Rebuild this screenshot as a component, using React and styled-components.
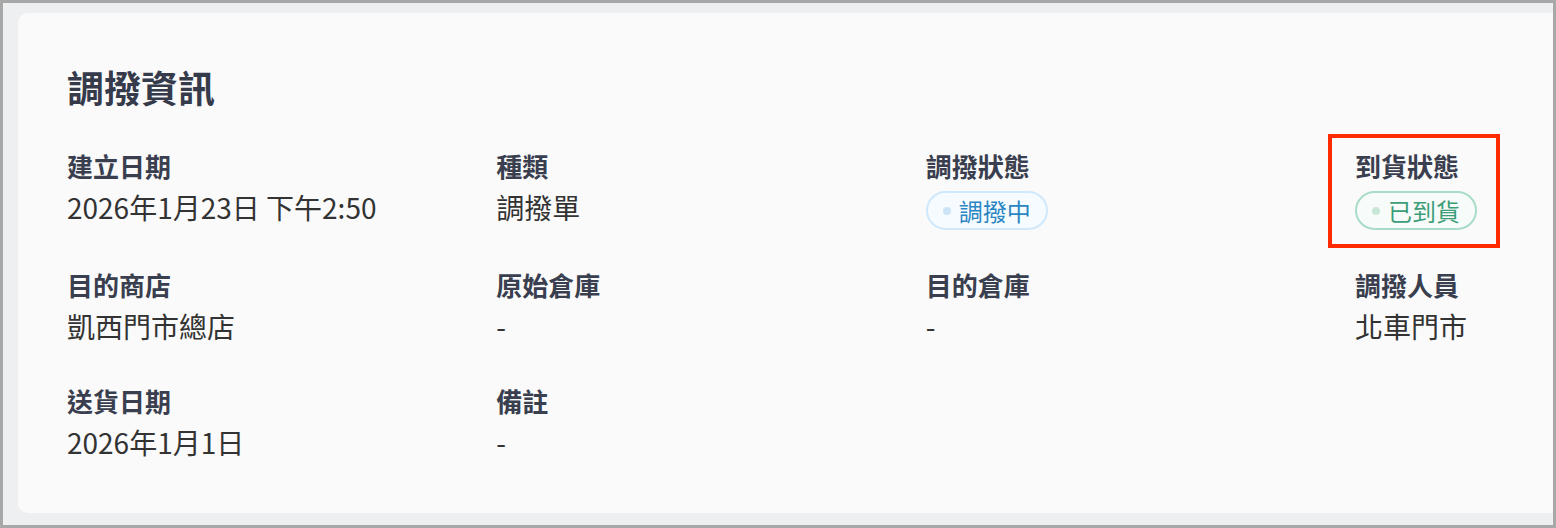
import React from "react";
import styled, { createGlobalStyle } from "styled-components";

const GlobalStyle = createGlobalStyle`
  html, body {
    margin: 0;
    padding: 0;
    background: #eeeff1;
  }
  body {
    font-family: "Noto Sans CJK TC", "Noto Sans", sans-serif;
  }
`;

const Frame = styled.div`
  box-sizing: border-box;
  width: 1556px;
  height: 528px;
  border: 3px solid #a8a8a8;
  background: #eeeff1;
  padding: 10px 0 12px 15px;
  overflow: hidden;
`;

const Card = styled.section`
  box-sizing: border-box;
  width: 1832px;
  height: 500px;
  background: #fafafa;
  border-radius: 10px;
  padding: 52px 49px 0 49px;
`;

const Title = styled.h2`
  margin: 0 0 37px;
  font-size: 37px;
  line-height: 44px;
  font-weight: 700;
  color: #363b4c;
`;

const Grid = styled.div`
  display: grid;
  grid-template-columns: repeat(4, 429.33px);
  row-gap: 35px;
`;

const Field = styled.div`
  position: relative;
  display: flex;
  flex-direction: column;
  align-items: flex-start;
  gap: 1px;
`;

const Highlight = styled.div`
  position: absolute;
  left: -27px;
  top: -12px;
  width: 172px;
  height: 114px;
  box-sizing: border-box;
  border: 4px solid #ff2a00;
  pointer-events: none;
`;

const Label = styled.div`
  font-size: 26px;
  line-height: 40px;
  font-weight: 600;
  color: #3a3f50;
`;

const Value = styled.div`
  font-size: 28px;
  line-height: 40px;
  font-weight: 400;
  color: #333333;
`;

const tones = {
  blue: { border: "#cfe8fb", bg: "#f6fbff", dot: "#cbe4f6", text: "#2a86c2" },
  green: { border: "#a8dcc6", bg: "#f7fbf9", dot: "#c9e6d9", text: "#3c9e78" },
};

const Badge = styled.span`
  box-sizing: border-box;
  display: inline-flex;
  align-items: center;
  gap: 8px;
  height: 39px;
  margin-top: 4px;
  padding: 0 15px 0 15px;
  border: 2px solid ${(p) => tones[p.$tone].border};
  border-radius: 20px;
  background: ${(p) => tones[p.$tone].bg};
  color: ${(p) => tones[p.$tone].text};
  font-size: 24px;
  line-height: 1;
  font-weight: 400;
`;

const Dot = styled.i`
  display: block;
  width: 8px;
  height: 8px;
  border-radius: 50%;
  background: ${(p) => tones[p.$tone].dot};
`;

const fields = [
  { label: "建立日期", value: "2026年1月23日 下午2:50" },
  { label: "種類", value: "調撥單" },
  { label: "調撥狀態", badge: "調撥中", tone: "blue" },
  { label: "到貨狀態", badge: "已到貨", tone: "green", marked: true },
  { label: "目的商店", value: "凱西門市總店" },
  { label: "原始倉庫", value: "-" },
  { label: "目的倉庫", value: "-" },
  { label: "調撥人員", value: "北車門市" },
  { label: "送貨日期", value: "2026年1月1日" },
  { label: "備註", value: "-" },
];

export default function App() {
  return (
    <>
      <GlobalStyle />
      <Frame>
        <Card>
          <Title>調撥資訊</Title>
          <Grid>
            {fields.map((f) => (
              <Field key={f.label}>
                {f.marked && <Highlight />}
                <Label>{f.label}</Label>
                {f.badge ? (
                  <Badge $tone={f.tone}>
                    <Dot $tone={f.tone} />
                    {f.badge}
                  </Badge>
                ) : (
                  <Value>{f.value}</Value>
                )}
              </Field>
            ))}
          </Grid>
        </Card>
      </Frame>
    </>
  );
}
